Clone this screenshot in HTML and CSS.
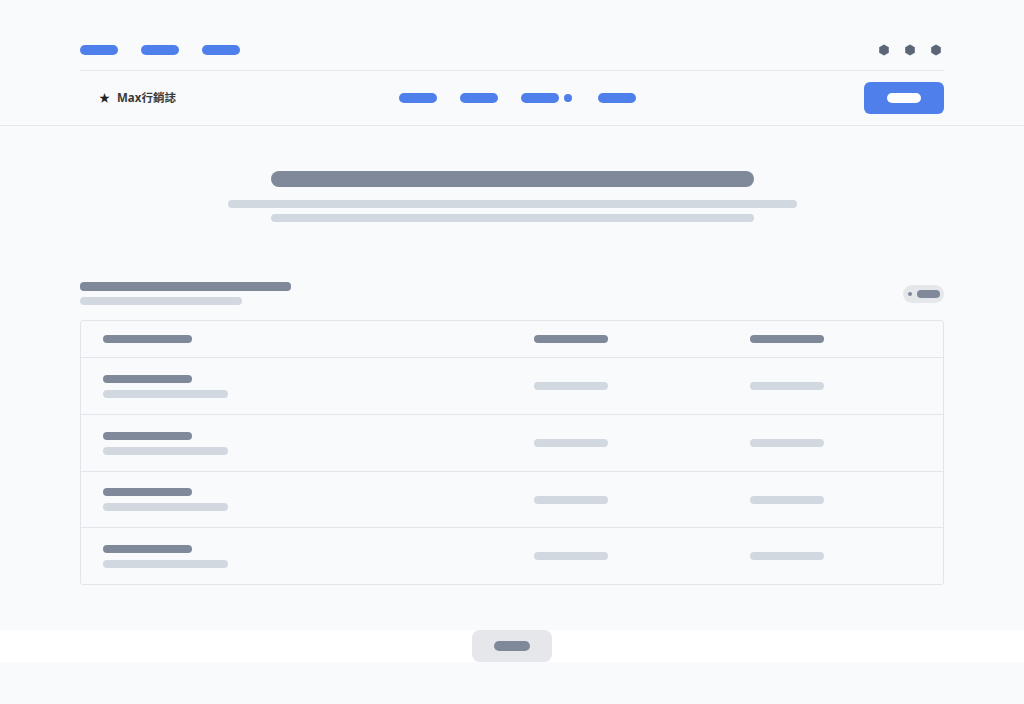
FILE: index.html
```html
<!DOCTYPE html>
<html lang="zh-Hant">
    <head>
        <meta charset="utf-8"/>
        <meta name="viewport" content="width=device-width, initial-scale=1.0"/>
        <title>Max行銷誌</title>
        <link rel="stylesheet" href="styles.css">
    </head>
    <body>
        <div class="topbar">
            <div class="topLinks">
                <span class="pill blue"></span>
                <span class="pill blue"></span>
                <span class="pill blue"></span>
            </div>
            <div class="topIcons">
                <svg class="hex" viewBox="0 0 12 12"><polygon points="6,0.5 10.8,3.2 10.8,8.8 6,11.5 1.2,8.8 1.2,3.2"/></svg>
                <svg class="hex" viewBox="0 0 12 12"><polygon points="6,0.5 10.8,3.2 10.8,8.8 6,11.5 1.2,8.8 1.2,3.2"/></svg>
                <svg class="hex" viewBox="0 0 12 12"><polygon points="6,0.5 10.8,3.2 10.8,8.8 6,11.5 1.2,8.8 1.2,3.2"/></svg>
            </div>
        </div>

        <header>
            <div class="navInner">
                <div class="brand">
                    <span class="star">★</span>
                    <span class="brandName">Max行銷誌</span>
                </div>
                <nav>
                    <span class="pill blue"></span>
                    <span class="pill blue"></span>
                    <span class="navGroup">
                        <span class="pill blue"></span>
                        <span class="dot"></span>
                    </span>
                    <span class="pill blue"></span>
                </nav>
                <div class="navRight">
                    <button class="cta"><span class="ctaLabel"></span></button>
                </div>
            </div>
        </header>

        <main>
            <section class="hero">
                <span class="heroTitle"></span>
                <span class="bar light heroLine1"></span>
                <span class="bar light heroLine2"></span>
            </section>

            <section class="listSection">
                <div class="sectionHead">
                    <div class="sectionTitles">
                        <span class="bar dark sectionTitle"></span>
                        <span class="bar light sectionSub"></span>
                    </div>
                    <div class="toggle">
                        <span class="toggleDot"></span>
                        <span class="toggleBar"></span>
                    </div>
                </div>

                <div class="table">
                    <div class="row headRow">
                        <div class="cell"><span class="bar dark w89"></span></div>
                        <div class="cell"><span class="bar dark w74"></span></div>
                        <div class="cell"><span class="bar dark w74"></span></div>
                    </div>
                    <div class="row">
                        <div class="cell stack"><span class="bar dark w89"></span><span class="bar light w125"></span></div>
                        <div class="cell"><span class="bar light w74"></span></div>
                        <div class="cell"><span class="bar light w74"></span></div>
                    </div>
                    <div class="row">
                        <div class="cell stack"><span class="bar dark w89"></span><span class="bar light w125"></span></div>
                        <div class="cell"><span class="bar light w74"></span></div>
                        <div class="cell"><span class="bar light w74"></span></div>
                    </div>
                    <div class="row">
                        <div class="cell stack"><span class="bar dark w89"></span><span class="bar light w125"></span></div>
                        <div class="cell"><span class="bar light w74"></span></div>
                        <div class="cell"><span class="bar light w74"></span></div>
                    </div>
                    <div class="row">
                        <div class="cell stack"><span class="bar dark w89"></span><span class="bar light w125"></span></div>
                        <div class="cell"><span class="bar light w74"></span></div>
                        <div class="cell"><span class="bar light w74"></span></div>
                    </div>
                </div>
            </section>
        </main>

        <footer>
            <button class="more"><span class="moreLabel"></span></button>
        </footer>
    </body>
</html>
```

FILE: styles.css
```css
*{margin:0;padding:0;box-sizing:border-box;}

body{
    background: #f8fafc;
    font-family: "Noto Sans", "Noto Sans CJK TC", sans-serif;
    color: #333;
}

.pill{
    display: block;
    width: 38px;
    height: 10px;
    border-radius: 5px;
}

.blue{
    background: #4f7fea;
}

.bar{
    display: block;
    height: 8px;
    border-radius: 4px;
}

.dark{
    background: #7f8999;
}

.light{
    background: #d2d8e0;
}

.w89{ width: 89px; }
.w74{ width: 74px; }
.w125{ width: 125px; }

/* top strip */
.topbar{
    display: flex;
    justify-content: space-between;
    align-items: center;
    width: 864px;
    height: 71px;
    margin: 0 auto;
    padding-top: 30px;
    border-bottom: 1px solid #e5e7eb;
}

.topLinks{
    display: flex;
    gap: 23px;
}

.topIcons{
    display: flex;
    gap: 14px;
    margin-right: 2px;
}

.hex{
    width: 12px;
    height: 12px;
    fill: #5b6677;
}

/* main nav */
header{
    border-bottom: 1px solid #e5e7eb;
}

.navInner{
    display: grid;
    grid-template-columns: 1fr auto 1fr;
    align-items: center;
    width: 864px;
    height: 54px;
    margin: 0 auto;
}

.brand{
    display: flex;
    align-items: center;
    gap: 7px;
    padding-left: 19px;
    margin-top: -2px;
}

.star{
    font-size: 11px;
    color: #222;
    line-height: 1;
}

.brandName{
    font-size: 11.5px;
    font-weight: 700;
    color: #3a3a3a;
}

nav{
    display: flex;
    align-items: center;
    gap: 23px;
    padding-left: 11px;
}

.navGroup{
    display: flex;
    align-items: center;
    gap: 5px;
    margin-right: 3px;
}

.dot{
    width: 8px;
    height: 8px;
    border-radius: 50%;
    background: #4f7fea;
}

.navRight{
    display: flex;
    justify-content: flex-end;
}

.cta{
    display: flex;
    justify-content: center;
    align-items: center;
    width: 80px;
    height: 32px;
    border: none;
    border-radius: 6px;
    background: #4f7fea;
}

.ctaLabel{
    width: 34px;
    height: 10px;
    border-radius: 5px;
    background: white;
}

/* hero */
.hero{
    display: flex;
    flex-direction: column;
    align-items: center;
    padding-top: 45px;
}

.heroTitle{
    width: 483px;
    height: 16px;
    border-radius: 8px;
    background: #7f8999;
}

.heroLine1{
    width: 569px;
    margin-top: 13px;
}

.heroLine2{
    width: 483px;
    margin-top: 6px;
}

/* list */
.listSection{
    width: 864px;
    margin: 60px auto 0;
}

.sectionHead{
    display: flex;
    justify-content: space-between;
    align-items: center;
}

.sectionTitles{
    display: flex;
    flex-direction: column;
    gap: 6px;
}

.sectionTitle{
    width: 211px;
    height: 9px;
}

.sectionSub{
    width: 162px;
}

.toggle{
    display: flex;
    align-items: center;
    gap: 5px;
    width: 41px;
    height: 18px;
    padding: 0 4px 0 5px;
    border-radius: 9px;
    background: #e5e7eb;
}

.toggleDot{
    width: 4px;
    height: 4px;
    border-radius: 50%;
    background: #7f8999;
}

.toggleBar{
    width: 23px;
    height: 8px;
    border-radius: 4px;
    background: #7f8999;
}

.table{
    margin-top: 15px;
    border: 1px solid #e2e5eb;
    border-radius: 3px;
}

.row{
    display: grid;
    grid-template-columns: 2fr 1fr 1fr;
    align-items: center;
    height: 57px;
    border-top: 1px solid #e2e5eb;
}

.row:nth-child(4){
    height: 56px;
}

.headRow{
    height: 36px;
    border-top: none;
}

.cell{
    padding: 0 22px;
}

.stack{
    display: flex;
    flex-direction: column;
    gap: 7px;
}

/* footer */
footer{
    display: flex;
    justify-content: center;
    margin-top: 45px;
    background: white;
}

.more{
    display: flex;
    justify-content: center;
    align-items: center;
    width: 80px;
    height: 32px;
    border: none;
    border-radius: 8px;
    background: #e5e7eb;
}

.moreLabel{
    width: 36px;
    height: 10px;
    border-radius: 5px;
    background: #7f8999;
}
```
